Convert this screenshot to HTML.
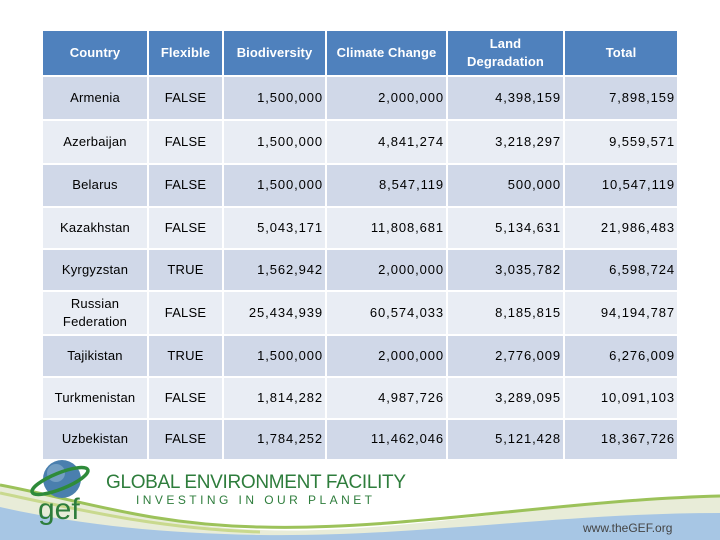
<!DOCTYPE html>
<html><head><meta charset="utf-8"><style>
body{margin:0;width:720px;height:540px;background:#fff;position:relative;overflow:hidden;font-family:"Liberation Sans",sans-serif}
.c{position:absolute;display:flex;align-items:center;justify-content:center;font-size:13px;color:#000;box-sizing:border-box;text-align:center;line-height:1.4;letter-spacing:0.2px}
.h{background:#4f81bd;color:#fff;font-weight:bold;letter-spacing:0.1px}
.o{background:#d0d8e8}.e{background:#e9edf4}
.r{justify-content:flex-end;padding-right:2px;letter-spacing:0.9px}
</style></head><body>
<div id="t"></div>
<svg style="position:absolute;left:0;top:455px" width="720" height="85">
<path d="M0 30 C80 45 150 70 260 75 C400 80 560 45 720 40 L720 85 L0 85Z" fill="#e8ecd8"/>
<path d="M0 52 C80 70 160 78 260 80 C420 82 560 58 720 58 L720 85 L0 85Z" fill="#a7c6e4"/>
<path d="M0 30 C80 45 150 70 260 72 C400 76 560 45 720 41" stroke="#9cc25a" stroke-width="3" fill="none"/>
<path d="M0 38 C80 55 160 74 260 77" stroke="#c9d98e" stroke-width="3" fill="none"/>
<circle cx="62" cy="24" r="19" fill="#4a7fae"/>
<circle cx="56" cy="18" r="9" fill="#8fb3cf" opacity=".6"/>
<ellipse cx="60" cy="26" rx="30" ry="8" transform="rotate(-22 60 26)" fill="none" stroke="#2e8b3a" stroke-width="3.5"/>
<text x="38" y="64" font-family="Liberation Sans" font-size="30" fill="#2e7d3c">gef</text>
<text x="106" y="33" font-family="Liberation Sans" font-size="19" fill="#2e7d3c" textLength="300">GLOBAL ENVIRONMENT FACILITY</text>
<text x="136" y="49" font-family="Liberation Sans" font-size="12" fill="#2e7d3c" textLength="240" letter-spacing="4">INVESTING IN OUR PLANET</text>
<text x="583" y="77" font-family="Liberation Sans" font-size="12" fill="#444">www.theGEF.org</text>
</svg>
<script>
var cols=[[43,147],[149,222],[224,325],[327,446],[448,563],[565,677]];
var rows=[[31,75],[77,119],[121,163],[165,206],[208,248],[250,290],[292,334],[336,376],[378,418],[420,459]];
var d=[["Country","Flexible","Biodiversity","Climate Change","Land<br>Degradation","Total"],
["Armenia","FALSE","1,500,000","2,000,000","4,398,159","7,898,159"],
["Azerbaijan","FALSE","1,500,000","4,841,274","3,218,297","9,559,571"],
["Belarus","FALSE","1,500,000","8,547,119","500,000","10,547,119"],
["Kazakhstan","FALSE","5,043,171","11,808,681","5,134,631","21,986,483"],
["Kyrgyzstan","TRUE","1,562,942","2,000,000","3,035,782","6,598,724"],
["Russian<br>Federation","FALSE","25,434,939","60,574,033","8,185,815","94,194,787"],
["Tajikistan","TRUE","1,500,000","2,000,000","2,776,009","6,276,009"],
["Turkmenistan","FALSE","1,814,282","4,987,726","3,289,095","10,091,103"],
["Uzbekistan","FALSE","1,784,252","11,462,046","5,121,428","18,367,726"]];
var h="";
for(var i=0;i<rows.length;i++)for(var j=0;j<6;j++){
var cl=i==0?"h":(i%2?"o":"e");if(i>0&&j>1)cl+=" r";
h+='<div class="c '+cl+'" style="left:'+cols[j][0]+'px;width:'+(cols[j][1]-cols[j][0])+'px;top:'+rows[i][0]+'px;height:'+(rows[i][1]-rows[i][0])+'px">'+d[i][j]+'</div>';}
document.getElementById("t").innerHTML=h;
</script>
</body></html>
